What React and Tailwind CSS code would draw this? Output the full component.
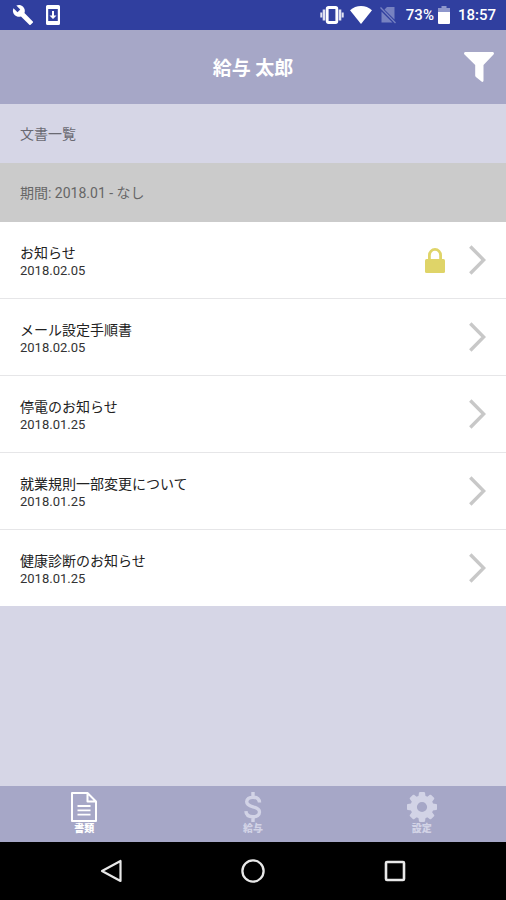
import { MdBuild } from "react-icons/md";

const documents = [
  { id: 1, title: "お知らせ", date: "2018.02.05", locked: true },
  { id: 2, title: "メール設定手順書", date: "2018.02.05" },
  { id: 3, title: "停電のお知らせ", date: "2018.01.25" },
  { id: 4, title: "就業規則一部変更について", date: "2018.01.25" },
  { id: 5, title: "健康診断のお知らせ", date: "2018.01.25" },
];

function StatusBar() {
  return (
    <div className="flex h-[30px] items-center justify-between bg-[#303f9f] pr-2.5 pl-3 text-[15px] text-white">
      <div className="flex items-center gap-3">
        <MdBuild className="size-[22px]" />
        <svg viewBox="0 0 14 20" className="h-5 w-3.5" aria-hidden="true">
          <path fillRule="evenodd" fill="currentColor" d="M1.5 0h11A1.5 1.5 0 0 1 14 1.500v17a1.500 1.500 0 0 1-1.500 1.500h-11A1.500 1.500 0 0 1 0 18.500v-17A1.500 1.500 0 0 1 1.500 0zM2.200 4v12h9.600V4z" />
          <path fill="currentColor" d="M6 6h2v4.500h2.500L7 14l-3.500-3.500H6z" />
        </svg>
      </div>
      <div className="flex items-center">
        <svg viewBox="0 0 24 18" className="mr-1.5 h-[18px] w-6" aria-hidden="true">
          <rect x="7.200" y="1.500" width="9.600" height="15" rx="1.200" fill="none" stroke="currentColor" strokeWidth="2.800" />
          <path stroke="currentColor" strokeOpacity=".85" strokeWidth="2.600" d="M4 3.500v11M20 3.500v11" />
          <path stroke="currentColor" strokeOpacity=".85" strokeWidth="2" d="M1.300 6.500v5M22.700 6.500v5" />
        </svg>
        <svg viewBox="0 0 22 18" className="mr-2 h-[18px] w-[22px]" aria-hidden="true">
          <path fill="currentColor" d="M11 18L0 4.300C3 1.500 7 0 11 0s8 1.500 11 4.300z" />
        </svg>
        <svg viewBox="0 0 16 18" className="mr-2.5 h-[18px] w-4 text-[#7782c1]" aria-hidden="true">
          <path fill="currentColor" d="M7 1h7.500v12.500L4.500 3.500zM1.500 5.500L12.500 16.500h-11z" />
          <path stroke="currentColor" strokeWidth="1.300" d="M.5 1.500L15.500 17" />
        </svg>
        <span className="font-medium">73%</span>
        <svg viewBox="0 0 12 18" className="mr-2 ml-1 h-[18px] w-3" aria-hidden="true">
          <path fill="#8e97cc" d="M3.500 0h5v2H12v4H0V2h3.500z" />
          <path fill="currentColor" d="M0 6h12v11a1 1 0 0 1-1 1H1a1 1 0 0 1-1-1z" />
        </svg>
        <span className="font-medium">18:57</span>
      </div>
    </div>
  );
}

function Header() {
  return (
    <header className="grid h-[74px] grid-cols-[1fr_auto_1fr] items-center bg-[#a6a7c7] px-3 text-white">
      <h1 className="col-start-2 pt-1 text-[19px] font-bold">給与 太郎</h1>
      <button type="button" aria-label="絞り込み" className="justify-self-end">
        <svg viewBox="0 0 30 30" className="size-[30px]" aria-hidden="true">
          <path fill="currentColor" d="M1.500 0h27c1.300 0 2 1.500 1 2.500L19.500 13V28.500c0 1.300-1 1.800-2 1l-5.300-4.200c-.6-.4-1-.9-1-1.500V13L.5 2.500C-.5 1.500.2 0 1.500 0z" />
        </svg>
      </button>
    </header>
  );
}

function DocumentRow({ doc }) {
  return (
    <li className="border-b border-[#e6e6e8] last:border-b-0">
      <a href={`#doc-${doc.id}`} className="flex h-[76px] items-center px-5">
        <div className="grow pt-px">
          <div className="text-sm leading-5 text-[#222]">{doc.title}</div>
          <div className="text-[13px] leading-4 text-[#333]">{doc.date}</div>
        </div>
        {doc.locked && (
          <svg viewBox="0 0 20 25" className="mr-6 h-[25px] w-5" role="img" aria-label="ロック">
            <path fill="none" stroke="#dfd468" strokeWidth="2.800" d="M4.400 13V7.200a5.600 5.800 0 0 1 11.200 0V13" />
            <rect y="11" width="20" height="14" rx="1.500" fill="#dfd468" />
          </svg>
        )}
        <svg viewBox="0 0 17 30" className="h-[30px] w-[17px]" aria-hidden="true">
          <path fill="none" stroke="#c8c8c8" strokeWidth="3.400" d="M1.300 1.500L14.700 15 1.300 28.500" />
        </svg>
      </a>
    </li>
  );
}

function TabBar() {
  return (
    <nav className="grid h-14 grid-cols-3 bg-[#a6a7c7] text-[10px] leading-3.5 font-black text-[#d2d3e6]">
      <a href="#documents" aria-current="page" className="flex flex-col items-center pt-1.5 text-white">
        <svg viewBox="0 0 26 30" className="h-[30px] w-[26px]" aria-hidden="true">
          <path fill="none" stroke="currentColor" strokeWidth="2" strokeLinejoin="round" d="M1 1h15.500L25 9.500V29H1zM16.500 1v8.500H25" />
          <path stroke="currentColor" strokeWidth="1.800" d="M6.500 14h13M6.500 18.300h13M6.500 22.600h13" />
        </svg>
        <span>書類</span>
      </a>
      <a href="#salary" className="flex flex-col items-center pt-1.5">
        <svg viewBox="0 0 18 30" className="h-[30px] w-[18px]" aria-hidden="true">
          <path fill="none" stroke="currentColor" strokeWidth="3.400" d="M15.500 10.500C15.300 7 12.800 5.200 9 5.200 5.300 5.200 2.700 7 2.700 9.800c0 3.100 2.900 4.100 6.300 5s6.500 2.200 6.500 5.300c0 3-2.700 4.700-6.500 4.700-4.200 0-6.900-1.900-7.100-5.600M9 0v5M9 25v5" />
        </svg>
        <span>給与</span>
      </a>
      <a href="#settings" className="flex flex-col items-center pt-1.5">
        <svg viewBox="0 0 30 30" className="size-[30px]" aria-hidden="true">
          <circle cx="15" cy="15" r="8.300" fill="none" stroke="currentColor" strokeWidth="6.400" />
          <g fill="currentColor">
            <path id="tooth" d="M11.200 6L12 .8Q12.200 0 13 0h4q.8 0 1 .8L18.800 6z" />
            <use href="#tooth" transform="rotate(45 15 15)" />
            <use href="#tooth" transform="rotate(90 15 15)" />
            <use href="#tooth" transform="rotate(135 15 15)" />
            <use href="#tooth" transform="rotate(180 15 15)" />
            <use href="#tooth" transform="rotate(225 15 15)" />
            <use href="#tooth" transform="rotate(270 15 15)" />
            <use href="#tooth" transform="rotate(315 15 15)" />
          </g>
        </svg>
        <span>設定</span>
      </a>
    </nav>
  );
}

function SystemNav() {
  return (
    <div className="flex h-[58px] items-center justify-center gap-[118px] bg-black text-[#e8e8e8]">
      <button type="button" aria-label="戻る">
        <svg viewBox="0 0 24 24" className="size-6" aria-hidden="true">
          <path fill="none" stroke="currentColor" strokeWidth="2.200" strokeLinejoin="round" d="M21.500 2v20L3 12z" />
        </svg>
      </button>
      <button type="button" aria-label="ホーム">
        <svg viewBox="0 0 24 24" className="size-6" aria-hidden="true">
          <circle cx="12" cy="12" r="10.600" fill="none" stroke="currentColor" strokeWidth="2.300" />
        </svg>
      </button>
      <button type="button" aria-label="アプリ履歴">
        <svg viewBox="0 0 24 24" className="size-6" aria-hidden="true">
          <rect x="3" y="3" width="18" height="18" rx="1" fill="none" stroke="currentColor" strokeWidth="2.600" />
        </svg>
      </button>
    </div>
  );
}

export default function App() {
  return (
    <div className="flex min-h-screen flex-col bg-[#d6d6e6] font-['Roboto','Noto_Sans_CJK_JP',sans-serif]" lang="ja">
      <StatusBar />
      <Header />
      <main className="grow">
        <h2 className="flex h-[59px] items-center px-5 text-sm text-[#6a6a72]">文書一覧</h2>
        <p className="flex h-[59px] items-center bg-[#cbcbcb] px-5 text-sm text-[#666]">期間: 2018.01 - なし</p>
        <ul className="bg-white">
          {documents.map((doc) => (
            <DocumentRow key={doc.id} doc={doc} />
          ))}
        </ul>
      </main>
      <TabBar />
      <SystemNav />
    </div>
  );
}
